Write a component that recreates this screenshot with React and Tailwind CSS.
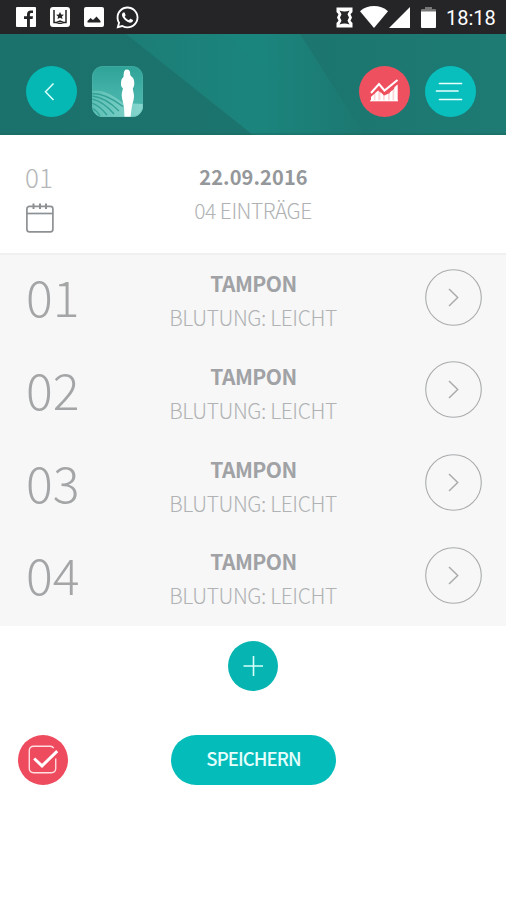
import { FaWhatsapp } from "react-icons/fa";

const entries = [
  { id: "01", title: "TAMPON", detail: "BLUTUNG: LEICHT" },
  { id: "02", title: "TAMPON", detail: "BLUTUNG: LEICHT" },
  { id: "03", title: "TAMPON", detail: "BLUTUNG: LEICHT" },
  { id: "04", title: "TAMPON", detail: "BLUTUNG: LEICHT" },
];

function StatusBar() {
  return (
    <div className="flex h-[34px] items-center justify-between bg-[#252427] pl-4 pr-[10px] text-white">
      <div className="flex items-center gap-[14px]">
        <svg width="20" height="20" viewBox="0 0 20 20">
          <rect width="20" height="20" rx="1" fill="#fff" />
          <path d="M11 20v-8H8V9.300h3V7.600c0-2.800 1.400-4.200 3.800-4.200H17v2.600h-1.600c-1 0-1.500.5-1.500 1.500v1.800H17l-.4 2.700h-2.700v8z" fill="#252427" />
        </svg>
        <svg width="20" height="20" viewBox="0 0 20 20">
          <rect width="20" height="20" rx="3" fill="#fff" />
          <path d="M4 3v12.500h2.500l3.500-1.500 3.500 1.500H16V3" fill="none" stroke="#252427" strokeWidth="1.500" />
          <path d="M6 17l4-1.500 4 1.500z" fill="#252427" />
          <path d="M10 5l1.200 2.500 2.700.2-2 1.800.6 2.600L10 10.700l-2.500 1.400.6-2.600-2-1.800 2.700-.2z" fill="#252427" />
        </svg>
        <svg width="20" height="20" viewBox="0 0 20 20">
          <rect width="20" height="20" rx="2" fill="#fff" />
          <path d="M3.500 15.500v-1.500l3-3 2.500 2 3.500-3.500 4 4.500v1.500z" fill="#252427" />
        </svg>
        <FaWhatsapp size={25} className="-ml-[3px]" />
      </div>
      <div className="flex items-center">
        <svg width="17" height="21" viewBox="0 0 17 21" className="mr-[7px]">
          <path d="M0.500 0.500h16v4.500l-2 2.200 1.500 3.300-1.500 3.300 2 2.200v4.500H0.500V16l2-2.200L1 10.500l1.500-3.300-2-2.200z" fill="#fff" />
          <path d="M3.500 3.500c3 1.300 7 1.300 10 0l-2 3.700 1.500 3.300-1.500 3.300 2 3.700c-3-1.300-7-1.300-10 0l2-3.700L4 10.500l1.500-3.300z" fill="#252427" />
        </svg>
        <svg width="28" height="22" viewBox="0 0 28 22">
          <path d="M0 5.200C8-1.600 20-1.600 28 5.200L14 22z" fill="#fff" />
        </svg>
        <svg width="21" height="21" viewBox="0 0 21 21" className="ml-[1px]">
          <path d="M21 0v21H0z" fill="#fff" />
        </svg>
        <svg width="15" height="21" viewBox="0 0 15 21" className="ml-[11px]">
          <path d="M4 0h7v2h3a1 1 0 0 1 1 1v2H0V3a1 1 0 0 1 1-1h3z" fill="#777" />
          <path d="M0 4.500h15V20a1 1 0 0 1-1 1H1a1 1 0 0 1-1-1z" fill="#fff" />
        </svg>
        <span className="ml-[10px] w-[50px] whitespace-nowrap pt-px font-['Roboto',sans-serif] text-[20px] leading-none">18:18</span>
      </div>
    </div>
  );
}

function AppLogo() {
  return (
    <svg width="51" height="51" viewBox="0 0 51 51">
      <defs>
        <linearGradient id="logoBg" x1="0" y1="0" x2="0" y2="1">
          <stop offset="0" stopColor="#2fa398" />
          <stop offset="0.55" stopColor="#45b2a8" />
          <stop offset="1" stopColor="#4db8ae" />
        </linearGradient>
        <linearGradient id="logoHill" x1="0" y1="0" x2="1" y2="0">
          <stop offset="0" stopColor="#5dbfb5" />
          <stop offset="1" stopColor="#86d6ce" />
        </linearGradient>
        <clipPath id="logoClip">
          <rect width="51" height="51" rx="11" />
        </clipPath>
      </defs>
      <g clipPath="url(#logoClip)">
        <rect width="51" height="51" fill="url(#logoBg)" />
        <path d="M0 25c12-2 22 5 31 12l20 1v13H0z" fill="url(#logoHill)" />
        <g fill="none" stroke="#33a196" strokeWidth="1.300">
          <path d="M0 27.500c12 0 22 6 31 13" />
          <path d="M0 30c11 1 20 8 27 15" />
          <path d="M0 33c9 2 16 8 22 15" />
          <path d="M0 37c6 2 11 7 15 12" />
          <path d="M0 42c4 2 6 4 8 8" />
        </g>
        <path d="M34.800 3.500c2.300 0 3.300 1.600 3.300 3.700 0 1.800.6 3 1.900 3.800 1.600 1 2.300 3.500 2.300 6.500 0 2.200-.6 3.700-1.500 5 .1 2.500 1.200 4.500 1.200 7.500 0 4-1.600 7.500-2.200 11L38.500 51H32.500l-.5-10c-.5-4-2.300-8-2.300-12 0-2.500.9-4.500 1.200-6.500-1.300-1.300-2-2.500-1.900-5 .1-3.200.7-5.200 2.300-6.200.4-.9.3-2 .4-3.600.2-2.500 1-4.200 3.100-4.200z" fill="#fff" />
      </g>
      <rect x="0.500" y="0.500" width="50" height="50" rx="10.500" fill="none" stroke="#5fbab1" strokeOpacity="0.300" />
    </svg>
  );
}

function Header() {
  return (
    <header className="relative h-[101px] bg-[#1c756f]">
      <svg width="506" height="101" viewBox="0 0 506 101" className="absolute inset-0">
        <defs>
          <linearGradient id="beam" x1="0" y1="0" x2="1" y2="0">
            <stop offset="0" stopColor="#1c7d76" />
            <stop offset="0.550" stopColor="#1b857d" />
            <stop offset="1" stopColor="#1c7871" />
          </linearGradient>
          <linearGradient id="base" x1="0" y1="0" x2="1" y2="0">
            <stop offset="0" stopColor="#1b716b" />
            <stop offset="0.500" stopColor="#1c746e" />
            <stop offset="1" stopColor="#1d7b74" />
          </linearGradient>
        </defs>
        <rect width="506" height="101" fill="url(#base)" />
        <path d="M126 0h174l64 101H253z" fill="url(#beam)" />
        <path d="M222 0h40l22 51z" fill="#1a887f" opacity="0.300" />
        <path d="M0 100h506" stroke="#196861" strokeWidth="2" opacity="0.400" />
      </svg>
      <div className="relative flex items-center pl-[26px] pr-[30px] pt-[32px]">
        <button className="flex size-[51px] items-center justify-center rounded-full bg-[#06b8b4]">
          <svg width="51" height="51" viewBox="0 0 51 51" fill="none" stroke="#d8fffb" strokeWidth="1.500">
            <path d="M27.500 17.500l-8 8.300 8 8.200" />
          </svg>
        </button>
        <div className="ml-[15px]">
          <AppLogo />
        </div>
        <button className="ml-auto size-[51px] rounded-full bg-[#ef5060]">
          <svg width="51" height="51" viewBox="0 0 51 51">
            <path d="M12 35v-4l7-6.500 6 5 6-2.500 7.500-8V35z" fill="#ffd5d9" />
            <path d="M12 35v-4l2.800-2.500V35zM16.500 35v-8l2.800-2.200V35zM21.500 35v-9l2.500 2.800V35zM25.800 35v-5l3.200-2V35zM30.800 35v-8.500l2.700-2.500V35zM35.300 35V21.500l3.200-3V35z" fill="#fff" />
            <path d="M11 34.800h28" stroke="#fff" strokeWidth="1" />
            <path d="M12 27l8-9 5.500 6.500L38.500 14" fill="none" stroke="#fff" strokeWidth="2" />
          </svg>
        </button>
        <button className="ml-[15px] size-[51px] rounded-full bg-[#08bfbd]">
          <svg width="51" height="51" viewBox="0 0 51 51" stroke="#e6fffd" strokeWidth="1.700" strokeLinecap="round">
            <path d="M14.500 17.500h22M11.500 25h21.500M14.500 33.500h22" />
          </svg>
        </button>
      </div>
    </header>
  );
}

function DaySummary() {
  return (
    <section className="grid h-[120px] grid-cols-[100px_1fr_100px] border-b-2 border-[#f0f0f0] bg-white pt-[28px]">
      <div className="pl-[25px]">
        <div className="h-[28px] text-[26px] font-light leading-[28px] text-[#b4b6b8]">01</div>
        <svg width="28" height="30" viewBox="0 0 28 30" fill="none" stroke="#8e9194" strokeWidth="1.700" className="ml-px mt-[12px]">
          <rect x="0.900" y="3.300" width="26" height="25.500" rx="2.500" />
          <path d="M1 10.500h26" />
          <path d="M7.500 0.500v5.500M14 0.500v5.500M20 0.500v5.500" strokeWidth="2" />
        </svg>
      </div>
      <div className="whitespace-nowrap text-center">
        <div className="pl-px text-[20px] font-bold leading-[28px] tracking-[0.1px] text-[#95989b]">22.09.2016</div>
        <div className="mt-[5px] text-[21px] font-light leading-[28px] tracking-[-0.5px] text-[#b0b2b4]">04 EINTRÄGE</div>
      </div>
    </section>
  );
}

function EntryRow({ entry }) {
  return (
    <li className="grid h-[92.8px] grid-cols-[100px_1fr_100px]">
      <div className="pl-[26px] pt-[7px] text-[50px] font-light leading-[66px] text-[#a3a5a7]">{entry.id}</div>
      <div className="whitespace-nowrap pt-[14px] text-center">
        <div className="pl-px text-[21px] font-bold leading-[28px] tracking-[-0.5px] text-[#a0a2a5]">{entry.title}</div>
        <div className="mt-[6px] text-[21px] font-light leading-[28px] tracking-[-0.4px] text-[#b0b2b4]">{entry.detail}</div>
      </div>
      <button className="ml-[19px] mt-[13.600px] size-[57px]">
        <svg width="57" height="57" viewBox="0 0 57 57" fill="none" stroke="#a9abad">
          <circle cx="28.500" cy="28.500" r="27.800" strokeWidth="1.100" />
          <path d="M24 20l8.700 8.500-8.700 8.500" strokeWidth="1.500" />
        </svg>
      </button>
    </li>
  );
}

function Actions() {
  return (
    <div className="flex-1 bg-white pt-[15px]">
      <button className="mx-auto flex size-[50px] items-center justify-center rounded-full bg-[#06b5b1]">
        <svg width="20" height="20" viewBox="0 0 20 20" stroke="#d8fffb" strokeWidth="1.600">
          <path d="M10.500 0v20M0.500 10h20" />
        </svg>
      </button>
      <div className="mt-[44px] grid grid-cols-[171px_165px_1fr] items-center">
        <button className="ml-[18px] size-[50px] rounded-full bg-[#ee4b5e]">
          <svg width="50" height="50" viewBox="0 0 51 51" fill="none" stroke="#fff">
            <path d="M36.500 13.500c-1-1.500-2-2-3.500-2H16c-3 0-4.500 1.500-4.500 4.500v18c0 3 1.500 4.500 4.500 4.500h18c3 0 4.500-1.500 4.500-4.500V24" stroke="#ffdfe2" strokeWidth="1.400" />
            <path d="M16.500 24l8 7.500L40 16.500" strokeWidth="3" />
          </svg>
        </button>
        <button className="h-[50px] rounded-full bg-[#04bdbb] pb-[2px] text-[18.500px] font-medium tracking-[-0.9px] text-[#e4fffd]">SPEICHERN</button>
      </div>
    </div>
  );
}

function App() {
  return (
    <div className="flex h-[900px] w-[506px] flex-col overflow-hidden bg-white font-['Noto_Sans_CJK_SC',sans-serif]">
      <StatusBar />
      <Header />
      <DaySummary />
      <ul className="bg-[#f7f7f7]">
        {entries.map((entry) => (
          <EntryRow key={entry.id} entry={entry} />
        ))}
      </ul>
      <Actions />
    </div>
  );
}

export default App;
